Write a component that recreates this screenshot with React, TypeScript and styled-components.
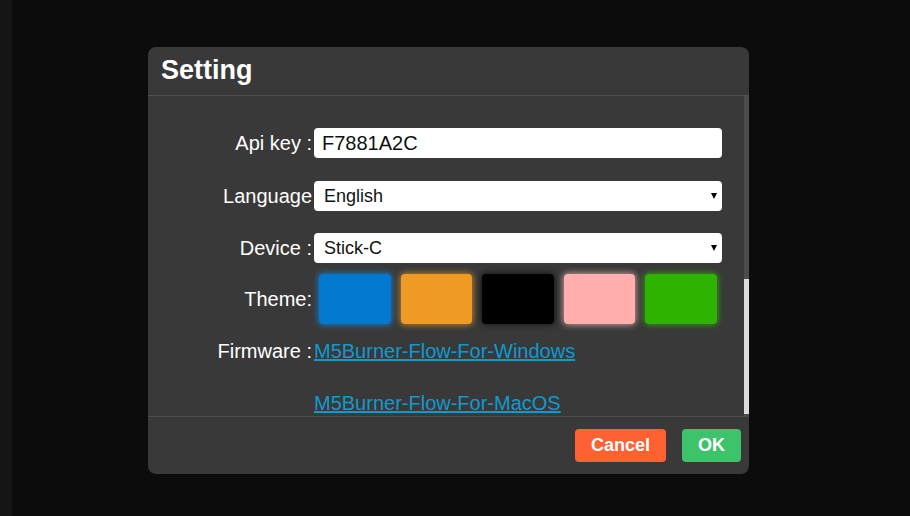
import React from "react";
import styled, { createGlobalStyle } from "styled-components";

const Global = createGlobalStyle`
  html, body { margin: 0; padding: 0; background: #0c0c0c; }
  body { font-family: "Liberation Sans", Arial, sans-serif; }
  #root { width: 910px; height: 516px; }
`;

const Page = styled.div`
  width: 910px;
  height: 516px;
  display: flex;
  background: #0c0c0c;
  overflow: hidden;
`;

const SideStrip = styled.div`
  width: 12px;
  flex: none;
  background: #151515;
`;

const Stage = styled.div`
  flex: 1;
  padding: 47px 0 0 136px;
`;

const Dialog = styled.div`
  width: 601px;
  background: #393939;
  border-radius: 8px;
  display: flex;
  flex-direction: column;
  overflow: hidden;
  color: #fff;
`;

const Header = styled.div`
  height: 49px;
  box-sizing: border-box;
  padding: 8px 13px 0;
  border-bottom: 1px solid #505050;
  font-size: 27px;
  font-weight: bold;
  line-height: 30px;
`;

const Body = styled.div`
  height: 320px;
  display: flex;
`;

const Form = styled.div`
  flex: 1;
  display: flex;
  flex-direction: column;
  padding-top: 32px;
`;

const Row = styled.div<{ $mt?: number; $align?: string }>`
  display: grid;
  grid-template-columns: 164px 408px;
  column-gap: 2px;
  align-items: ${(p) => p.$align || "center"};
  margin-top: ${(p) => p.$mt || 0}px;
`;

const Label = styled.label`
  justify-self: end;
  font-size: 20px;
  line-height: 23px;
  white-space: nowrap;
  color: #fff;
`;

const TextInput = styled.input`
  height: 30px;
  box-sizing: border-box;
  border: none;
  border-radius: 4px;
  background: #fff;
  padding: 0 8px;
  font-family: "Liberation Sans", Arial, sans-serif;
  font-size: 20px;
  color: #111;
  outline: none;
`;

const SelectWrap = styled.div`
  position: relative;
  height: 30px;
  &::after {
    content: "";
    position: absolute;
    right: 5px;
    top: 12px;
    border-left: 3.5px solid transparent;
    border-right: 3.5px solid transparent;
    border-top: 6px solid #000;
    pointer-events: none;
  }
`;

const Select = styled.select`
  width: 100%;
  height: 30px;
  appearance: none;
  -webkit-appearance: none;
  border: none;
  border-radius: 4px;
  background: #fff;
  padding: 0 10px;
  font-family: "Liberation Sans", Arial, sans-serif;
  font-size: 18px;
  color: #111;
  outline: none;
`;

const Swatches = styled.div`
  display: flex;
  gap: 10px;
  padding: 0 5px;
`;

const Swatch = styled.div<{ $c: string; $glow: string }>`
  flex: 1;
  height: 50px;
  border-radius: 4px;
  background: ${(p) => p.$c};
  box-shadow: 0 0 6px 1px ${(p) => p.$glow};
`;

const Links = styled.div`
  display: flex;
  flex-direction: column;
  align-items: flex-start;
  gap: 29px;
`;

const Link = styled.a`
  font-size: 20px;
  line-height: 23px;
  color: #1199cc;
  text-decoration: underline;
`;

const ScrollTrack = styled.div`
  width: 5px;
  background: #4b4b4b;
  display: flex;
  flex-direction: column;
  justify-content: flex-end;
  padding-bottom: 2px;
  box-sizing: border-box;
`;

const ScrollThumb = styled.div`
  height: 135px;
  background: #dcdcdc;
`;

const Footer = styled.div`
  border-top: 1px solid #4d4d4d;
  padding: 12px 8px 12px;
  display: flex;
  justify-content: flex-end;
  gap: 16px;
`;

const Button = styled.button<{ $bg: string }>`
  height: 33px;
  padding: 0 16px;
  border: none;
  border-radius: 4px;
  background: ${(p) => p.$bg};
  color: #fff;
  font-family: "Liberation Sans", Arial, sans-serif;
  font-weight: bold;
  font-size: 18px;
`;

const themes = [
  { c: "#0279cf", g: "rgba(20,140,230,0.75)" },
  { c: "#ee9a24", g: "rgba(240,160,40,0.7)" },
  { c: "#000000", g: "rgba(0,0,0,0.6)" },
  { c: "#ffadad", g: "rgba(255,200,200,0.7)" },
  { c: "#2db300", g: "rgba(50,190,10,0.7)" },
];

export default function App() {
  return (
    <>
      <Global />
      <Page>
        <SideStrip />
        <Stage>
          <Dialog>
            <Header>Setting</Header>
            <Body>
              <Form>
                <Row>
                  <Label>Api key :</Label>
                  <TextInput defaultValue="F7881A2C" />
                </Row>
                <Row $mt={23}>
                  <Label>Language</Label>
                  <SelectWrap>
                    <Select defaultValue="English">
                      <option>English</option>
                      <option>中文</option>
                    </Select>
                  </SelectWrap>
                </Row>
                <Row $mt={22}>
                  <Label>Device :</Label>
                  <SelectWrap>
                    <Select defaultValue="Stick-C">
                      <option>Stick-C</option>
                      <option>Core</option>
                    </Select>
                  </SelectWrap>
                </Row>
                <Row $mt={11}>
                  <Label>Theme:</Label>
                  <Swatches>
                    {themes.map((t) => (
                      <Swatch key={t.c} $c={t.c} $glow={t.g} />
                    ))}
                  </Swatches>
                </Row>
                <Row $mt={16} $align="start">
                  <Label>Firmware :</Label>
                  <Links>
                    <Link href="#">M5Burner-Flow-For-Windows</Link>
                    <Link href="#">M5Burner-Flow-For-MacOS</Link>
                  </Links>
                </Row>
              </Form>
              <ScrollTrack>
                <ScrollThumb />
              </ScrollTrack>
            </Body>
            <Footer>
              <Button $bg="#ff6133">Cancel</Button>
              <Button $bg="#3dc46b">OK</Button>
            </Footer>
          </Dialog>
        </Stage>
      </Page>
    </>
  );
}
